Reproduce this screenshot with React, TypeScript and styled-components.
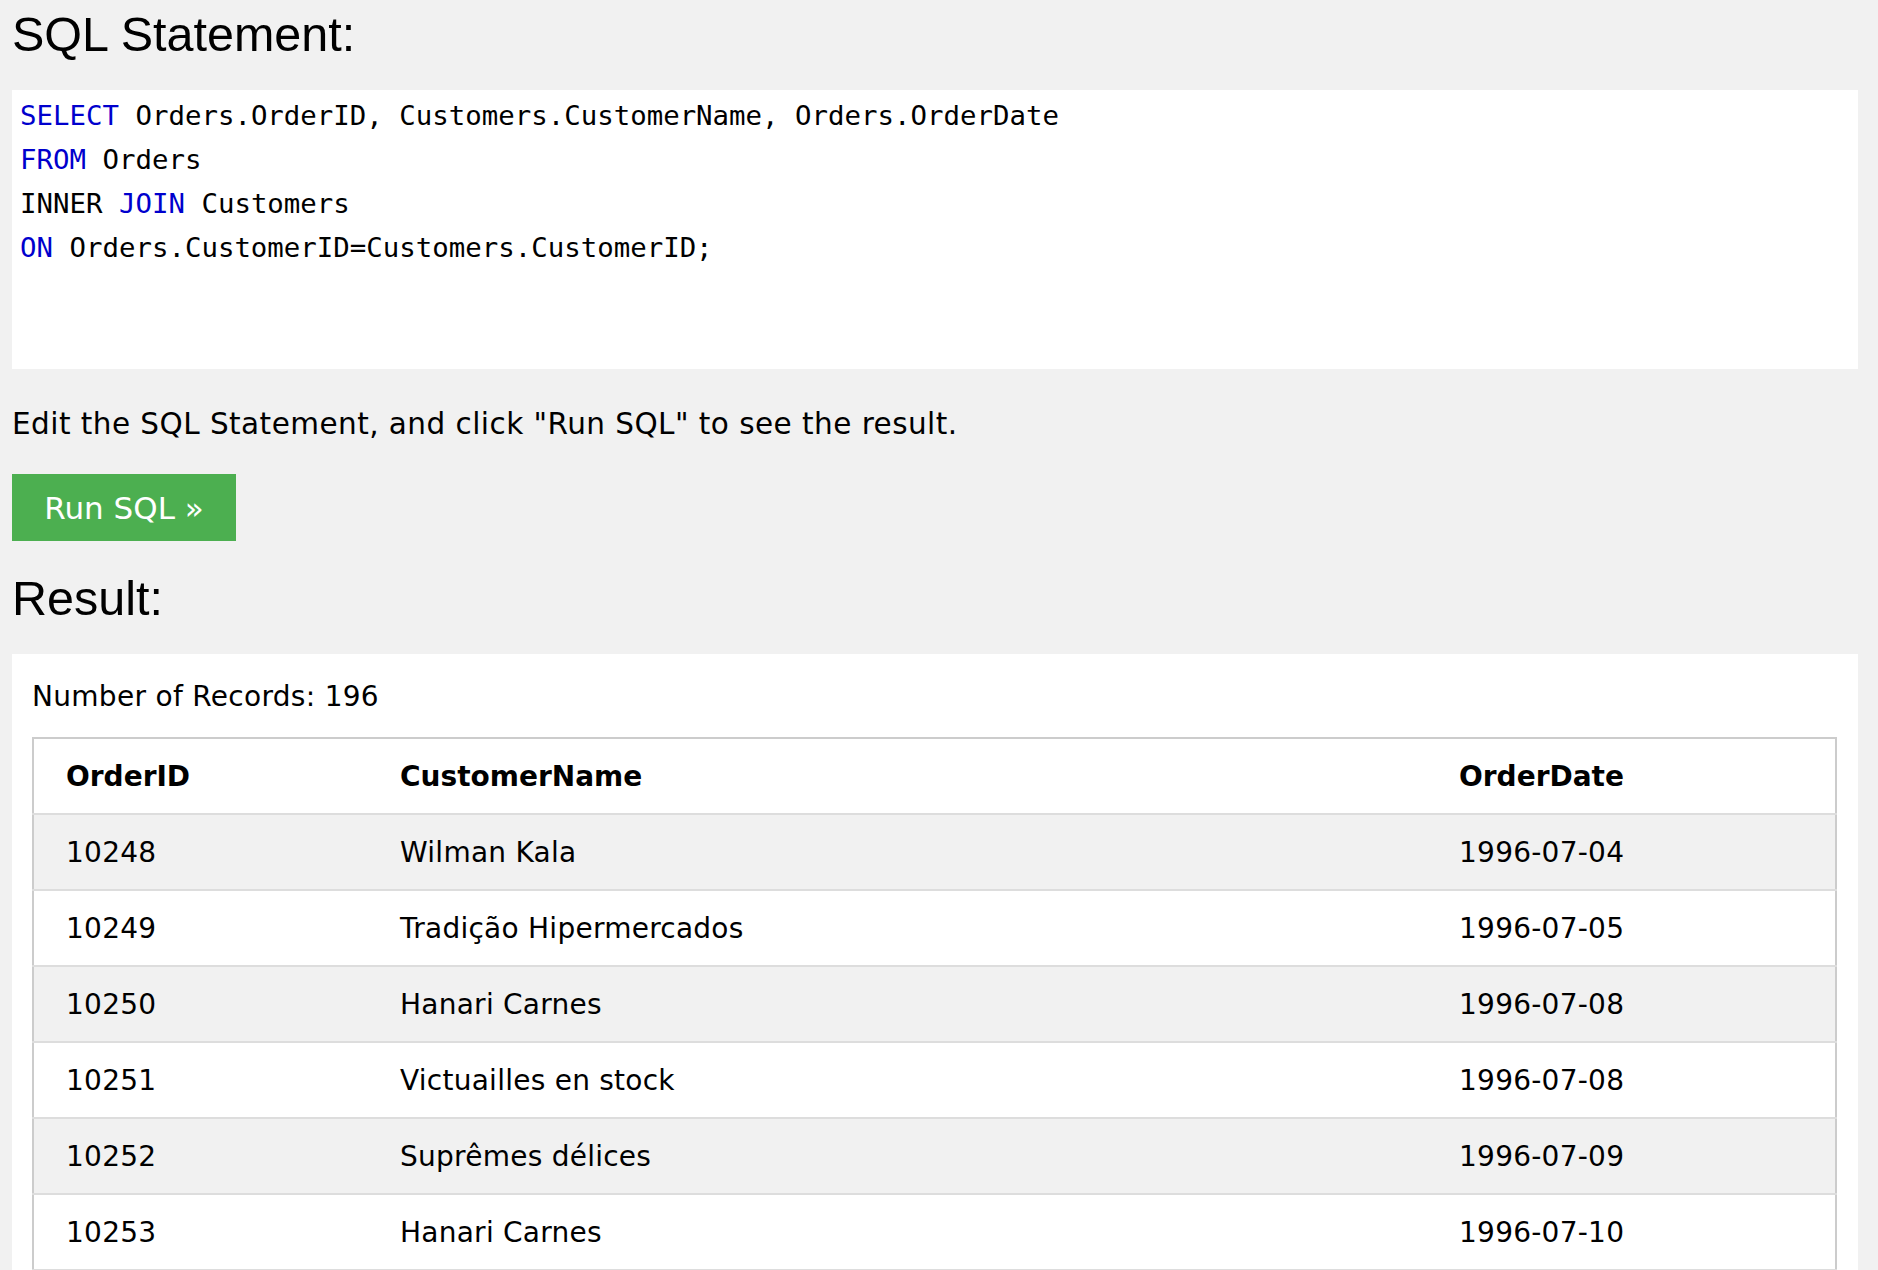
import React from 'react';
import styled, { createGlobalStyle } from 'styled-components';

const GlobalStyle = createGlobalStyle`
  html, body {
    margin: 0;
    padding: 0;
    background: #f1f1f1;
  }
  body {
    font-family: 'DejaVu Sans', Verdana, sans-serif;
    color: #000;
  }
`;

const Page = styled.div`
  padding: 7px 20px 0 12px;
  display: flex;
  flex-direction: column;
`;

const Heading = styled.h2`
  font-family: 'Liberation Sans', Arial, sans-serif;
  font-weight: 400;
  font-size: 48.5px;
  line-height: 55px;
  margin: 0 0 28px;
`;

const CodeBox = styled.div`
  background: #fff;
  height: 279px;
  box-sizing: border-box;
  padding: 4px 8px;
  font-family: 'DejaVu Sans Mono', 'Liberation Mono', monospace;
  font-size: 27.4px;
  line-height: 44px;
  white-space: pre;
`;

const Keyword = styled.span`
  color: mediumblue;
`;

const Hint = styled.p`
  font-size: 29.5px;
  letter-spacing: 0.45px;
  line-height: 33px;
  margin: 39px 0 33px;
`;

const RunButton = styled.button`
  align-self: flex-start;
  width: 224px;
  height: 67px;
  border: none;
  background: #4caf50;
  color: #fff;
  font-family: 'DejaVu Sans', Verdana, sans-serif;
  font-size: 31px;
  padding: 0;
  margin-bottom: 30px;
  cursor: pointer;
`;

const ResultBox = styled.div`
  background: #fff;
  padding: 26px 21px 0 20px;
  min-height: 620px;
`;

const Records = styled.p`
  font-size: 28px;
  letter-spacing: 0.3px;
  line-height: 33px;
  margin: 0 0 24px;
`;

const Table = styled.table`
  width: 100%;
  border-collapse: collapse;
  border: 2px solid #ccc;
  table-layout: fixed;
  font-size: 28px;
`;

const Row = styled.tr<{ $striped?: boolean }>`
  background: ${(p) => (p.$striped ? '#f1f1f1' : '#fff')};
  border-bottom: 2px solid #ddd;
`;

const HeadCell = styled.th<{ $width?: number }>`
  width: ${(p) => (p.$width ? `${p.$width}px` : 'auto')};
  text-align: left;
  font-weight: 700;
  height: 74px;
  padding: 0 0 0 32px;
  vertical-align: middle;
`;

const Cell = styled.td`
  height: 74px;
  padding: 0 0 0 32px;
  vertical-align: middle;
  letter-spacing: 0.25px;
`;

const rows = [
  ['10248', 'Wilman Kala', '1996-07-04'],
  ['10249', 'Tradição Hipermercados', '1996-07-05'],
  ['10250', 'Hanari Carnes', '1996-07-08'],
  ['10251', 'Victuailles en stock', '1996-07-08'],
  ['10252', 'Suprêmes délices', '1996-07-09'],
  ['10253', 'Hanari Carnes', '1996-07-10'],
];

const App = () => {
  return (
    <Page>
      <GlobalStyle />
      <Heading>SQL Statement:</Heading>
      <CodeBox>
        <Keyword>SELECT</Keyword> Orders.OrderID, Customers.CustomerName, Orders.OrderDate
        {'\n'}
        <Keyword>FROM</Keyword> Orders
        {'\n'}
        INNER <Keyword>JOIN</Keyword> Customers
        {'\n'}
        <Keyword>ON</Keyword> Orders.CustomerID=Customers.CustomerID;
      </CodeBox>
      <Hint>Edit the SQL Statement, and click "Run SQL" to see the result.</Hint>
      <RunButton>Run SQL »</RunButton>
      <Heading>Result:</Heading>
      <ResultBox>
        <Records>Number of Records: 196</Records>
        <Table>
          <thead>
            <Row>
              <HeadCell $width={302}>OrderID</HeadCell>
              <HeadCell $width={1027}>CustomerName</HeadCell>
              <HeadCell>OrderDate</HeadCell>
            </Row>
          </thead>
          <tbody>
            {rows.map((r, i) => (
              <Row key={r[0]} $striped={i % 2 === 0}>
                <Cell>{r[0]}</Cell>
                <Cell>{r[1]}</Cell>
                <Cell>{r[2]}</Cell>
              </Row>
            ))}
          </tbody>
        </Table>
      </ResultBox>
    </Page>
  );
};

export default App;
